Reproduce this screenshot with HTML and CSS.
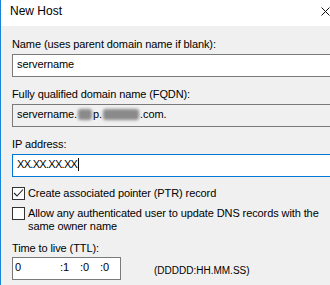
FILE: index.html
```html
<!DOCTYPE html>
<html lang="en">

<head>
    <meta charset="UTF-8">
    <title>New Host</title>
    <link rel="stylesheet" href="styles.css">
</head>

<body>
    <div class="dialog">
        <div class="title-bar">
            <span class="title">New Host</span>
            <svg class="close" width="9" height="9" viewBox="0 0 9 9">
                <path d="M0.5 0.5 L8.5 8.5 M8.5 0.5 L0.5 8.5" stroke="#111" stroke-width="1" />
            </svg>
        </div>

        <div class="content">
            <div class="label">Name (uses parent domain name if blank):</div>
            <div class="field">servername</div>

            <div class="label">Fully qualified domain name (FQDN):</div>
            <div class="field readonly">servername.<span class="blur short"></span>p.<span class="blur long"></span>.com.</div>

            <div class="label">IP address:</div>
            <div class="field focused"><span class="ip">XX.XX.XX.XX</span><span class="caret"></span></div>

            <div class="check-row first">
                <span class="checkbox">
                    <svg width="11" height="11" viewBox="0 0 11 11">
                        <path d="M1 5 L4 8 L10 1.5" fill="none" stroke="#222" stroke-width="1.1" />
                    </svg>
                </span>
                <span class="check-text">Create associated pointer (PTR) record</span>
            </div>
            <div class="check-row">
                <span class="checkbox"></span>
                <span class="check-text">Allow any authenticated user to update DNS records with the same owner name</span>
            </div>

            <div class="label ttl-label">Time to live (TTL):</div>
            <div class="ttl-row">
                <div class="ttl-box">
                    <span class="ttl-days">0</span>
                    <span class="ttl-part">:1</span>
                    <span class="ttl-part">:0</span>
                    <span class="ttl-part">:0</span>
                </div>
                <span class="ttl-format">(DDDDD:HH.MM.SS)</span>
            </div>
        </div>
    </div>
</body>

</html>
```

FILE: styles.css
```css
html,
body {
    margin: 0;
    padding: 0;
    overflow: hidden;
}

body {
    width: 330px;
    height: 285px;
    background-color: #f0f0f0;
    font-family: "Liberation Sans", Arial, sans-serif;
    font-size: 11px;
    letter-spacing: -0.1px;
    color: #000;
}

.dialog {
    width: 329px;
    height: 285px;
    overflow: hidden;
    border-left: 1px solid #1883d7;
    background-color: #f0f0f0;
}

.title-bar {
    height: 26px;
    background-color: #fff;
    display: flex;
    align-items: flex-start;
    justify-content: space-between;
    padding-left: 9px;
}

.title {
    font-size: 12px;
    letter-spacing: 0;
    line-height: 14px;
    margin-top: 4px;
}

.close {
    margin-top: 7px;
}

.content {
    padding-left: 11px;
}

.label {
    line-height: 15px;
    margin-top: 10px;
    margin-bottom: 2px;
}

.content > .label:first-child {
    margin-top: 11px;
}

.field {
    width: 350px;
    height: 21px;
    line-height: 19px;
    border: 1px solid #7a7a7a;
    background-color: #fff;
    padding-left: 4px;
    white-space: nowrap;
}

.field.readonly {
    background-color: #f0f0f0;
}

.field.focused {
    border-color: #0078d7;
}

.blur {
    display: inline-block;
    height: 11px;
    vertical-align: -2px;
    background-color: #8a8a8a;
    border-radius: 3px;
    filter: blur(1.5px);
}

.blur.short {
    width: 14px;
    margin: 0 1px;
}

.blur.long {
    width: 36px;
    margin: 0 1px;
}

.ip {
    letter-spacing: -0.7px;
}

.caret {
    display: inline-block;
    width: 1px;
    height: 13px;
    background-color: #000;
    vertical-align: -3px;
    margin-left: 1px;
}

.check-row {
    display: flex;
    align-items: flex-start;
    margin-top: 7px;
    line-height: 13px;
}

.check-row.first {
    margin-top: 10px;
}

.checkbox {
    flex: none;
    width: 11px;
    height: 11px;
    border: 1px solid #333;
    background-color: #fff;
    margin-right: 3px;
    display: flex;
    align-items: center;
    justify-content: center;
}

.check-text {
    width: 300px;
}

.ttl-label {
    margin-top: 8px;
    margin-bottom: 1px;
}

.ttl-row {
    display: flex;
    align-items: center;
}

.ttl-box {
    width: 107px;
    height: 21px;
    line-height: 18px;
    border: 1px solid #7a7a7a;
    background-color: #fff;
    display: flex;
    align-items: flex-start;
}

.ttl-days {
    width: 45px;
    padding-left: 2px;
}

.ttl-part {
    width: 20px;
}

.ttl-format {
    margin-left: 33px;
    margin-top: 3px;
    font-size: 10px;
    letter-spacing: 0;
}
```
